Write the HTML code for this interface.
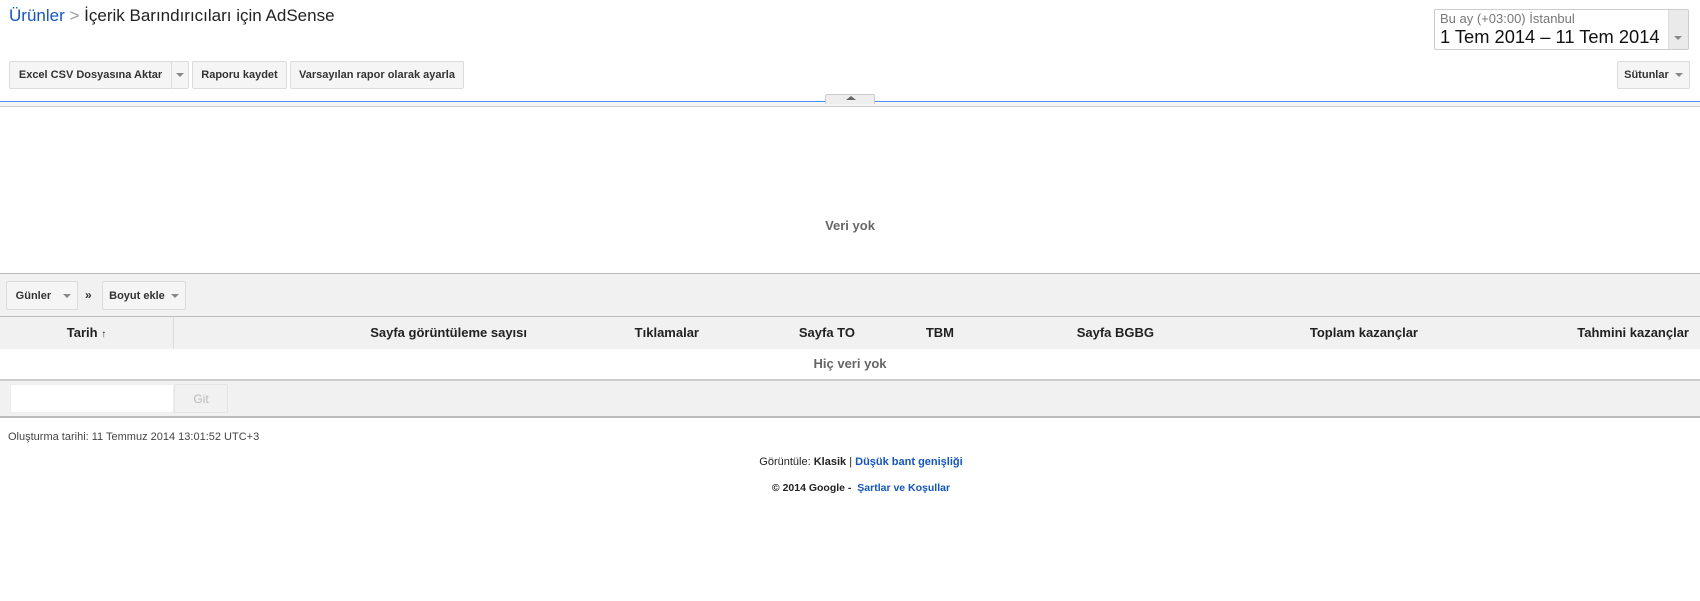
<!DOCTYPE html>
<html><head><meta charset="utf-8"><style>
*{margin:0;padding:0;box-sizing:border-box}
body{width:1700px;height:601px;background:#fff;font-family:"Liberation Sans",Arial,sans-serif;position:relative;overflow:hidden;color:#222}
.a{position:absolute}
.btn{position:absolute;background:#f5f5f5;border:1px solid #dcdcdc;border-radius:2px;font-size:11px;font-weight:bold;color:#333;display:flex;align-items:center;justify-content:center}
.arr{display:inline-block;width:0;height:0;border-left:4px solid transparent;border-right:4px solid transparent;border-top:4px solid #888}
.h{position:absolute;top:317px;height:32px;line-height:32px;font-size:13px;font-weight:bold;color:#222}
</style></head><body>
<div class="a" style="left:9px;top:6px;font-size:17px;color:#222;white-space:nowrap"><span style="color:#15c">Ürünler</span> <span style="color:#999">&gt;</span> İçerik Barındırıcıları için AdSense</div>

<div class="a" style="left:1434px;top:9px;width:255px;height:41px;border:1px solid #ccc;border-radius:2px"></div>
<div class="a" style="left:1668px;top:10px;width:20px;height:39px;background:#eaeaea;border-left:1px solid #ddd"></div>
<div class="a" style="left:1674px;top:27px"><span class="arr"></span></div>
<div class="a" style="left:1440px;top:11px;font-size:13px;color:#777">Bu ay (+03:00) İstanbul</div>
<div class="a" style="left:1440px;top:26px;font-size:18.3px;color:#111">1 Tem 2014 – 11 Tem 2014</div>

<div class="btn" style="left:9px;top:61px;width:163px;height:28px">Excel CSV Dosyasına Aktar</div>
<div class="btn" style="left:171px;top:61px;width:18px;height:28px"><span class="arr"></span></div>
<div class="btn" style="left:192px;top:61px;width:95px;height:28px">Raporu kaydet</div>
<div class="btn" style="left:290px;top:61px;width:174px;height:28px">Varsayılan rapor olarak ayarla</div>
<div class="btn" style="left:1617px;top:61px;width:73px;height:28px">Sütunlar&nbsp;&nbsp;<span class="arr"></span></div>

<div class="a" style="left:0;top:101px;width:1700px;height:1px;background:#4d90fe"></div>
<div class="a" style="left:0;top:102px;width:1700px;height:5px;background:#f5f5f5;border-bottom:1px solid #ccc"></div>
<div class="a" style="left:825px;top:94px;width:50px;height:10px;background:#eee;border:1px solid #ccc;border-bottom:none;border-radius:2px 2px 0 0"></div>
<div class="a" style="left:846px;top:96px;width:0;height:0;border-left:5px solid transparent;border-right:5px solid transparent;border-bottom:4px solid #666"></div>

<div class="a" style="left:0;top:218px;width:1700px;text-align:center;font-size:13px;font-weight:bold;color:#666">Veri yok</div>

<div class="a" style="left:0;top:273px;width:1700px;height:44px;background:#f1f1f1;border-top:1px solid #bbb;border-bottom:1px solid #bbb"></div>
<div class="btn" style="left:6px;top:281px;width:72px;height:29px;font-size:11px">&nbsp;Günler&nbsp;&nbsp;&nbsp;&nbsp;<span class="arr"></span></div>
<div class="a" style="left:85px;top:288px;font-size:12px;font-weight:bold;color:#333">»</div>
<div class="btn" style="left:102px;top:281px;width:84px;height:29px">Boyut ekle&nbsp;&nbsp;<span class="arr"></span></div>

<div class="a" style="left:0;top:317px;width:1700px;height:32px;background:#f1f1f1"></div>
<div class="a" style="left:173px;top:317px;width:1px;height:32px;background:#ddd"></div>
<div class="h" style="left:0;width:173px;text-align:center">Tarih <span style="font-size:10px">&#8593;</span></div>
<div class="h" style="right:1173px">Sayfa görüntüleme sayısı</div>
<div class="h" style="right:1001px">Tıklamalar</div>
<div class="h" style="right:845px">Sayfa TO</div>
<div class="h" style="right:746px">TBM</div>
<div class="h" style="right:546px">Sayfa BGBG</div>
<div class="h" style="right:282px">Toplam kazançlar</div>
<div class="h" style="right:11px">Tahmini kazançlar</div>
<div class="a" style="left:0;top:356px;width:1700px;text-align:center;font-size:13px;font-weight:bold;color:#666">Hiç veri yok</div>

<div class="a" style="left:0;top:379px;width:1700px;height:39px;background:#f1f1f1;border-top:2px solid #ccc;border-bottom:2px solid #bbb"></div>
<div class="a" style="left:10px;top:384px;width:164px;height:29px;background:#fff;border:1px solid #eee"></div>
<div class="btn" style="left:174px;top:384px;width:54px;height:29px;color:#bbb;font-weight:normal;font-size:12px;border-color:#e5e5e5;background:#f1f1f1">Git</div>

<div class="a" style="left:8px;top:431px;font-size:11px;color:#444">Oluşturma tarihi: 11 Temmuz 2014 13:01:52 UTC+3</div>
<div class="a" style="left:0;top:456px;width:1722px;text-align:center;font-size:11px;color:#222">Görüntüle: <b>Klasik</b> | <span style="color:#15c;font-weight:bold">Düşük bant genişliği</span></div>
<div class="a" style="left:0;top:482px;width:1722px;text-align:center;font-size:10.5px;color:#222;font-weight:bold">© 2014 Google - &nbsp;<span style="color:#15c">Şartlar ve Koşullar</span></div>
</body></html>
